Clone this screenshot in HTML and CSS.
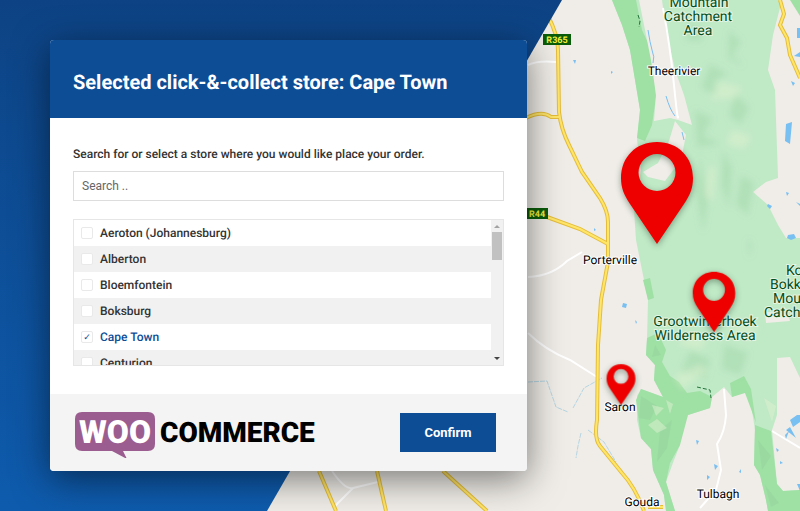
FILE: index.html
```
<!DOCTYPE html>
<html lang="en">
<head>
    <meta charset="UTF-8">
    <meta name="viewport" content="width=device-width, initial-scale=1.0">
    <title>Click &amp; Collect - Select store</title>
    <link rel="stylesheet" href="styles.css">
</head>
<body>
    <!-- Map background -->
    <svg class="map" viewBox="0 0 800 511" preserveAspectRatio="xMaxYMin slice">
        <defs>
            <linearGradient id="blue" x1="0" y1="0" x2="0" y2="1">
                <stop offset="0" stop-color="#0d4384"/>
                <stop offset="1" stop-color="#0e5bad"/>
            </linearGradient>
            <filter id="soft" x="-30%" y="-30%" width="160%" height="160%">
                <feGaussianBlur stdDeviation="3"/>
            </filter>
            <path id="pin" fill-rule="evenodd" d="M0,-102 C-21,-102 -36,-87 -36,-66 C-36,-56 -33,-49 -27,-40 L0,0 L27,-40 C33,-49 36,-56 36,-66 C36,-87 21,-102 0,-102 Z M0,-90 A18.500,18.500 0 1 1 0,-53 A18.500,18.500 0 1 1 0,-90 Z"/>
        </defs>

        <rect width="800" height="511" fill="#f0ede8"/>

        <!-- Green areas -->
        <path class="forest" d="M612,0 L622,25 L630,50 L635,80 L640,110 L637,140 L641,170 L634,210 L636,240 L642,270 L648,300 L647,340 L646,355 L655,365 L654,380 L663,397 L641,389 L637,396 L637,420 L641,438 L651,449 L653,470 L664,495 L666,511 L675,511 L666,482 L674,460 L680,445 L682,420 L688,415 L710,408 L712,397 L724,387 L732,397 L744,392 L750,398 L755,430 L754,465 L760,475 L766,500 L768,511 L800,511 L800,490 L783,491 L777,484 L772,430 L777,415 L777,358 L790,357 L800,378 L800,238 L786,238 L778,225 L768,205 L753,192 L766,182 L778,178 L775,90 L768,70 L773,35 L782,0 Z"/>
        <path class="forest-dark" d="M612,0 L636,0 L642,30 L649,45 L655,82 L656,97 L652,125 L645,141 L637,138 L640,110 L635,80 L630,50 L622,25 Z"/>
        <path class="forest-dark" d="M647,338 L658,333 L666,350 L662,362 L670,376 L679,382 L687,393 L700,391 L712,397 L710,408 L688,415 L680,445 L670,463 L666,482 L675,511 L666,511 L664,495 L653,470 L651,449 L641,438 L636,400 L641,389 L663,397 L654,380 L655,365 L646,355 Z"/>
        <path class="forest-dark" d="M755,425 L771,431 L777,484 L783,491 L800,490 L800,511 L768,511 L766,500 L760,475 L754,465 Z"/>
        <path class="forest-dark" d="M730,383 L744,376 L751,389 L756,423 L751,409 L745,393 L732,397 Z"/>
        <path class="forest-dark" d="M643,280 L650,278 L654,298 L648,300 Z M790,0 L800,0 L800,16 Z"/>
        <path class="land" d="M639,0 L662,0 L666,30 L675,70 L684,95 L692,125 L678,120 L670,118 L654,121 L656,95 L651,60 Z"/>
        <path class="land" d="M675,121 L686,135 L681,160 L665,181 L648,177 L643,172 L658,163 L669,141 Z"/>
        <path class="land" d="M765,312 L787,313 L790,321 L766,323 Z"/>

        <!-- Relief -->
        <g filter="url(#soft)">
            <path class="relief-dark" d="M690,22 l14,8 l-4,12 l-15,-3 Z M710,64 l18,10 l-14,8 l3,14 l-16,-8 Z M729,30 l12,12 l-9,13 l12,11 l-16,-8 Z M695,110 l17,8 l-9,18 l18,8 l-24,3 Z M735,92 l14,16 l-8,16 l-12,-8 Z M700,158 l8,42 l-5,32 l-7,-40 Z M723,150 l9,18 l-3,40 l-8,-24 Z M741,175 l13,8 l-6,32 l-12,-10 Z M748,238 l4,8 l-3,12 Z M690,350 l20,9 l-4,20 l-25,-7 Z M724,344 l24,9 l-8,22 l-18,-6 Z"/>
            <path class="relief-light" d="M720,82 l22,5 l-6,11 l-26,2 Z M732,130 l20,6 l-8,13 l-18,-5 Z M709,166 l7,2 l-3,34 l-8,-7 Z M684,333 l24,6 l-8,11 l-21,-5 Z M674,376 l26,-11 l8,6 l-26,18 Z M735,318 l22,8 l-6,15 l-19,-7 Z"/>
        </g>
        <path class="relief-dark" d="M641,396 l16,10 l-7,14 l-11,-2 Z M660,430 l12,-10 l-5,28 l-10,14 Z M758,440 l13,16 l-9,14 Z M765,485 l14,18 l-8,4 Z M655,345 l6,10 l-9,2 Z"/>
        <path class="relief-light" d="M648,425 l9,-6 l10,9 l-10,5 Z M764,398 l12,8 l-4,16 Z M652,405 l12,3 l-8,8 Z M666,400 l7,4 l-3,10 Z"/>
        <path class="trail" d="M638,15 l2,6 l-1,6 M697,387 l13,3 l1,8"/>

        <!-- Minor roads -->
        <path class="road-white" d="M663,8 Q670,45 674,85 T678,116 M528,65 Q538,60 556,62 M528,277 Q552,276 567,261 L582,252 M528,333 Q545,350 570,360 L597,377 M724,389 L726,415 Q725,432 717,444 L721,470 L716,490 L700,508 M772,431 L800,448 M332,471 Q345,490 353,488 L378,482 M353,488 L335,506"/>

        <!-- Water -->
        <path class="river" d="M648,30 Q650,43 652,50 Q655,57 653,63 M666,96 Q670,110 675,116 M682,132 l2,8"/>
        <path class="river stream" d="M528,382 L547,381 L556,407 L568,412 M573,408 L584,388 L602,378 M581,433 L578,446 L576,458 M588,430 L604,442 L616,462"/>
        <path class="water" d="M786,124 l6,-2 l-2,22 l-5,-3 Z M797,28 h3 v10 h-3 Z M794,56 l6,-4 v5 Z M791,81 l4,2 l-2,3 Z M768,204 l4,2 l-2,3 l-3,-3 Z M788,235 l6,-1 l2,4 l-5,2 l-4,-2 Z M786,192 l3,1 l-2,3 Z M796,202 l4,2 v2 Z M623,303 l4,1 l-1,4 l-4,-1 Z M635,320 l2,2 l-1,2 Z M573,60 l3,0 l-1,4 Z M611,71 l2,1 l-2,2 Z M790,420 l7,-5 h3 v7 l-7,5 Z M796,438 l-10,-8 l4,-3 Z M785,435 l4,-4 l-3,8 Z M714,464 l4,2 l-3,4 Z M707,475 l3,2 l-3,3 Z M696,440 l3,1 l-2,4 Z M776,448 l3,2 l-2,2 Z M780,461 l3,2 l-3,1 Z M797,484 h3 v7 Z M731,451 l1,2 Z M739,472 l2,-3 v4 Z M594,228 l2,2 l-2,1 Z"/>

        <!-- Main roads -->
        <g class="road-edge">
            <path id="r1" d="M548,16 Q558,35 558,50 L559,112 Q561,129 569,145 L582,172 L600,198 Q608,211 608,222 L608,262 L601,300 L598,345 L597,420 Q594,439 600,446 L622,473 Q635,487 644,511"/>
            <path id="r2" d="M526,118 Q542,110 551,117 H559 M547,217 L580,229 L608,244 M319,471 L336,511 M377,471 L386,511 M443,471 L487,511 M780,0 L784,14 L780,25 L787,38 L790,55 L800,78 M648,507 H663"/>
        </g>
        <g class="road-fill">
            <use href="#r1"/>
            <use href="#r2"/>
        </g>

        <!-- Road signs -->
        <rect x="543" y="34" width="28" height="11" fill="#0a5c0a"/>
        <text class="sign" x="557" y="43">R365</text>
        <rect x="526" y="208" width="22" height="11" fill="#0a5c0a"/>
        <text class="sign" x="537" y="217">R44</text>

        <!-- Names -->
        <g class="area">
            <text x="699" y="7">Mountain</text>
            <text x="698" y="21">Catchment</text>
            <text x="698" y="35">Area</text>
            <text x="705" y="326">Grootwinterhoek</text>
            <text x="705" y="340">Wilderness Area</text>
        </g>
        <g class="area area-start">
            <text x="786" y="275">Koue</text>
            <text x="770" y="289">Bokkeveld</text>
            <text x="773" y="303">Mountain</text>
            <text x="764" y="317">Catchment</text>
        </g>
        <g class="town">
            <text x="674" y="75">Theerivier</text>
            <text x="610" y="264">Porterville</text>
            <text x="620" y="411">Saron</text>
            <text x="718" y="498">Tulbagh</text>
            <text x="642" y="506">Gouda</text>
        </g>

        <!-- Pins -->
        <g fill="#33513a" opacity="0.5" filter="url(#soft)">
            <use href="#pin" transform="translate(657 246)"/>
            <use href="#pin" transform="translate(714 334) scale(.59)"/>
            <use href="#pin" transform="translate(621 407) scale(.4)"/>
        </g>
        <g fill="#ee0000">
            <use href="#pin" transform="translate(657 244)"/>
            <use href="#pin" transform="translate(714 332) scale(.59)"/>
            <use href="#pin" transform="translate(621 405) scale(.4)"/>
        </g>

        <!-- Blue side -->
        <path fill="url(#blue)" d="M-2000,0 H562 L267,511 H-2000 Z"/>
    </svg>

    <form class="modal">
        <div class="modal-header">
            <h1>Selected click-&amp;-collect store: Cape Town</h1>
        </div>
        <div class="modal-body">
            <label class="search-label" for="search">Search for or select a store where you would like place your order.</label>
            <input class="search" type="text" id="search" placeholder="Search ..">
            <div class="store-box">
                <div class="stores">
                    <label class="store"><input type="checkbox">Aeroton (Johannesburg)</label>
                    <label class="store"><input type="checkbox">Alberton</label>
                    <label class="store"><input type="checkbox">Bloemfontein</label>
                    <label class="store"><input type="checkbox">Boksburg</label>
                    <label class="store selected"><input type="checkbox" checked>Cape Town</label>
                    <label class="store"><input type="checkbox">Centurion</label>
                </div>
                <div class="scrollbar">
                    <span class="arrow-up"></span>
                    <span class="thumb"></span>
                    <span class="arrow-down"></span>
                </div>
            </div>
        </div>
        <div class="modal-footer">
            <svg class="logo" width="242" height="52" viewBox="0 -6 242 52" role="img" aria-label="WooCommerce">
                <path fill="#9b5c8f" d="M8,0 H74 Q81,0 81,7 V32 Q81,39 74,39 H49 L53,47 L38,39 H8 Q1,39 1,32 V7 Q1,0 8,0 Z"/>
                <text class="woo" x="41" y="31">WOO</text>
                <text class="commerce" x="86" y="30">COMMERCE</text>
            </svg>
            <button class="confirm" type="button">Confirm</button>
        </div>
    </form>
</body>
</html>
```
FILE: styles.css
```
* {
    box-sizing: border-box;
}

body {
    margin: 0;
    padding: 40px 50px;
    min-height: 100vh;
    font-family: Roboto, Arial, sans-serif;
    font-size: 12px;
    color: #333;
    background-color: #0d4384;
    text-rendering: geometricPrecision;
}

.map {
    position: absolute;
    top: 0;
    left: 0;
    width: 100%;
    height: 100%;
}

.land {
    fill: #f0ede8;
}

.forest {
    fill: #c0e9c6;
}

.forest-dark {
    fill: #9fe0a5;
}

.relief-dark {
    fill: #8fcc99;
    opacity: 0.3;
}

.relief-light {
    fill: #e0f1cf;
    opacity: 0.5;
}

.trail {
    fill: none;
    stroke: #24743b;
    stroke-dasharray: 4 2;
}

.road-white {
    fill: none;
    stroke: #fff;
    stroke-width: 2px;
}

.river {
    fill: none;
    stroke: #78bff2;
}

.stream {
    stroke: #b5d5e2;
    stroke-dasharray: 5 1;
}

.water {
    fill: #78bff2;
}

.road-edge {
    fill: none;
    stroke: #e5bd3b;
    stroke-width: 4px;
}

.road-fill use {
    stroke: #ffe669;
    stroke-width: 2px;
}

.road-fill {
    fill: none;
    stroke: #ffe669;
    stroke-width: 2px;
}

.sign {
    font-size: 9px;
    font-weight: 700;
    fill: #f4f13a;
    text-anchor: middle;
}

.area {
    font-size: 14px;
    fill: #064d1c;
    stroke: #e4f5e4;
    stroke-width: 2px;
    paint-order: stroke;
    text-anchor: middle;
}

.area-start {
    text-anchor: start;
}

.town {
    font-size: 12px;
    fill: #000;
    stroke: #fff;
    stroke-width: 2px;
    paint-order: stroke;
    text-anchor: middle;
}

.modal {
    position: relative;
    width: 100%;
    max-width: 477px;
    border-radius: 4px;
    overflow: hidden;
    background-color: #fff;
    box-shadow: 0 8px 36px rgba(0, 0, 0, 0.5);
}

.modal-header {
    padding: 30px 23px 24px;
    background-color: #0d4d96;
}

.modal-header h1 {
    margin: 0;
    font-size: 20px;
    line-height: 24px;
    font-weight: 700;
    color: #fff;
}

.modal-body {
    display: flex;
    flex-direction: column;
    padding: 28px 23px;
}

.search-label {
    margin-bottom: 9px;
    line-height: 16px;
    font-weight: 500;
}

.search {
    height: 30px;
    margin-bottom: 18px;
    padding: 0 8px;
    border: 1px solid #ddd;
    font-family: inherit;
    font-size: 12px;
    color: #333;
}

.search::placeholder {
    color: #666;
}

.store-box {
    display: flex;
    height: 147px;
    border: 1px solid #e6e6e6;
    overflow: hidden;
}

.stores {
    flex: 1;
}

.store {
    display: flex;
    align-items: center;
    gap: 7px;
    height: 26px;
    padding: 0 7px;
    font-weight: 500;
}

.store:nth-child(even) {
    background-color: #f1f1f1;
}

.store input {
    appearance: none;
    display: flex;
    justify-content: center;
    align-items: center;
    width: 12px;
    height: 12px;
    margin: 0;
    border: 1px solid #e9e9e9;
    border-radius: 2px;
    background-color: #fff;
}

.store input:checked::before {
    content: '✓';
    font-family: "DejaVu Sans", sans-serif;
    font-size: 9px;
    font-weight: 700;
    color: #0d4d96;
}

.selected {
    color: #0d4d96;
}

.scrollbar {
    display: flex;
    flex-direction: column;
    align-items: center;
    width: 12px;
    padding: 5px 0;
    background-color: #f1f1f1;
}

.arrow-up, .arrow-down {
    border: 3px solid transparent;
}

.arrow-up {
    border-top: 0;
    border-bottom-color: #a3a3a3;
}

.arrow-down {
    margin-top: auto;
    border-bottom: 0;
    border-top-color: #444;
}

.thumb {
    width: 10px;
    height: 28px;
    margin-top: 4px;
    background-color: #c1c1c1;
}

.modal-footer {
    display: flex;
    justify-content: space-between;
    align-items: center;
    padding: 12px 31px 13px 24px;
    background-color: #f4f4f4;
}

.woo {
    font-size: 32px;
    font-weight: 900;
    fill: #fff;
    text-anchor: middle;
}

.commerce {
    font-size: 28px;
    font-weight: 900;
}

.confirm {
    width: 96px;
    height: 39px;
    border: none;
    font-family: inherit;
    font-size: 13px;
    font-weight: 700;
    color: #fff;
    background-color: #0d4d96;
    cursor: pointer;
}

.confirm:hover {
    background-color: #0a3d78;
}
```
